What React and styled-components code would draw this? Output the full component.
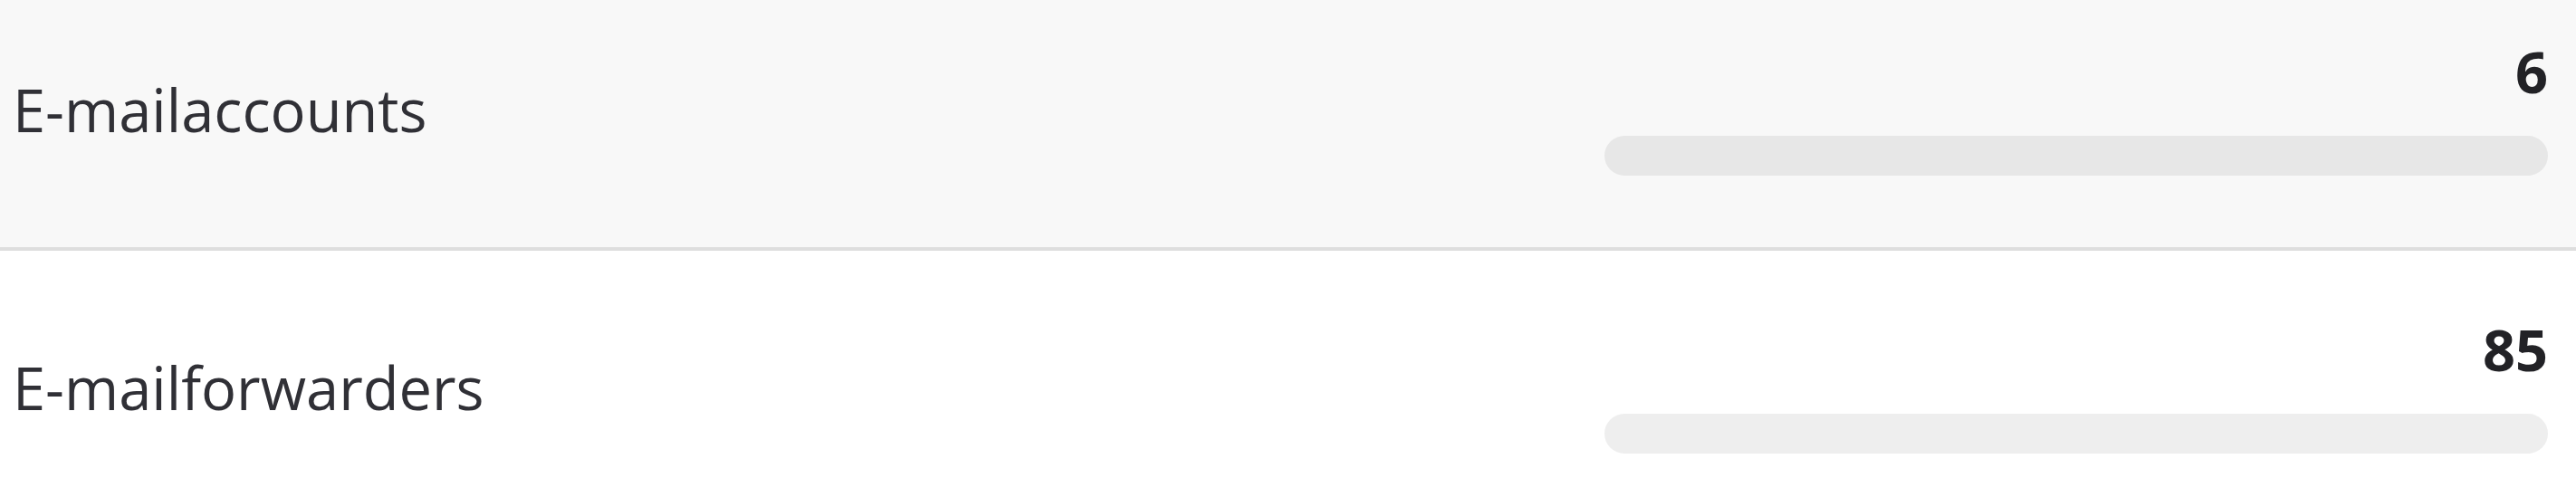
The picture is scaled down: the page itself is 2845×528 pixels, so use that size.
import React from "react";
import styled, { createGlobalStyle } from "styled-components";

const Global = createGlobalStyle`
  html, body {
    margin: 0;
    padding: 0;
    background: #ffffff;
    overflow: hidden;
  }
  body {
    width: 2845px;
    height: 528px;
    font-family: "Open Sans", "Noto Sans", sans-serif;
  }
`;

const List = styled.div`
  display: flex;
  flex-direction: column;
  height: 528px;
  overflow: hidden;
`;

const Rows = styled.div`
  display: flex;
  flex-direction: column;
  flex-shrink: 0;
  margin-top: -32px;
`;

const Row = styled.div`
  display: flex;
  align-items: center;
  justify-content: space-between;
  height: 305px;
  box-sizing: border-box;
  padding: 0 31px 0 14px;
  background: ${(p) => (p.$shaded ? "#f8f8f8" : "#ffffff")};
  border-top: ${(p) => (p.$divided ? "4px solid #dedede" : "none")};
`;

const Label = styled.div`
  font-size: 65px;
  font-weight: 400;
  color: #303036;
  white-space: nowrap;
`;

const Usage = styled.div`
  display: flex;
  flex-direction: column;
  align-items: flex-end;
  width: 1042px;
  gap: 40px;
`;

const Count = styled.div`
  font-size: 63px;
  font-stretch: 88%;
  font-weight: 700;
  line-height: 1;
  color: #222226;
`;

const Track = styled.div`
  width: 100%;
  height: 44px;
  border-radius: 22px;
  background: rgba(0, 0, 0, 0.066);
  overflow: hidden;
`;

const Fill = styled.div`
  height: 100%;
  background: rgba(0, 0, 0, 0.066);
`;

const rows = [
  { label: "E-mailaccounts", count: 6 },
  { label: "E-mailforwarders", count: 85 },
];

export default function App() {
  return (
    <>
      <Global />
      <List>
        <Rows>
          {rows.map((r, i) => (
            <Row key={r.label} $shaded={i === 0} $divided={i > 0}>
              <Label>{r.label}</Label>
              <Usage>
                <Count>{r.count}</Count>
                <Track>
                  <Fill style={{ width: "0%" }} />
                </Track>
              </Usage>
            </Row>
          ))}
        </Rows>
      </List>
    </>
  );
}
